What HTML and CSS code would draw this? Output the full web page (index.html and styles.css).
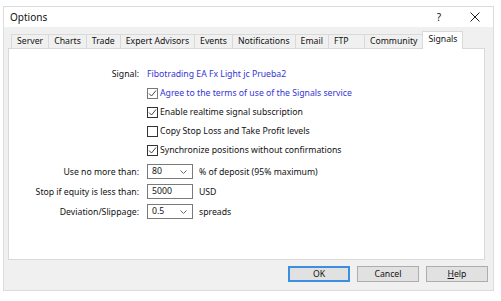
FILE: index.html
```html
<!DOCTYPE html>
<html lang="en">
<head>
  <meta charset="UTF-8">
  <title>Options</title>
  <link rel="stylesheet" href="styles.css">
</head>
<body>
  <div class="window">
    <div class="titlebar">
      <span class="title">Options</span>
      <span class="tb-btn help-q">?</span>
      <span class="tb-btn close">
        <svg width="10" height="10" viewBox="0 0 10 10"><path d="M0.5 0.5 L9.5 9.5 M9.5 0.5 L0.5 9.5" stroke="#222" stroke-width="1"/></svg>
      </span>
    </div>

    <div class="body">
      <div class="tabs">
        <div class="tab">Server</div>
        <div class="tab">Charts</div>
        <div class="tab">Trade</div>
        <div class="tab">Expert Advisors</div>
        <div class="tab">Events</div>
        <div class="tab">Notifications</div>
        <div class="tab">Email</div>
        <div class="tab tab-ftp">FTP</div>
        <div class="tab">Community</div>
        <div class="tab active">Signals</div>
      </div>

      <div class="panel">
        <div class="signal-row">
          <span class="label">Signal:</span>
          <span class="link">Fibotrading EA Fx Light jc Prueba2</span>
        </div>

        <div class="checks">
          <label class="check focus"><span class="box"><svg width="9" height="9" viewBox="0 0 9 9"><path d="M1 4.5 L3.5 7 L8 1.5" fill="none" stroke="#444"/></svg></span><span class="link">Agree to the terms of use of the Signals service</span></label>
          <label class="check"><span class="box"><svg width="9" height="9" viewBox="0 0 9 9"><path d="M1 4.5 L3.5 7 L8 1.5" fill="none" stroke="#444"/></svg></span>Enable realtime signal subscription</label>
          <label class="check"><span class="box"></span>Copy Stop Loss and Take Profit levels</label>
          <label class="check"><span class="box"><svg width="9" height="9" viewBox="0 0 9 9"><path d="M1 4.5 L3.5 7 L8 1.5" fill="none" stroke="#444"/></svg></span>Synchronize positions without confirmations</label>
        </div>

        <div class="fields">
          <span class="label">Use no more than:</span>
          <div class="control">
            <span class="field combo">80<svg width="7" height="4" viewBox="0 0 7 4"><path d="M0.5 0.5 L3.5 3.5 L6.5 0.5" fill="none" stroke="#666"/></svg></span>
            <span class="unit">% of deposit (95% maximum)</span>
          </div>

          <span class="label">Stop if equity is less than:</span>
          <div class="control">
            <span class="field">5000</span>
            <span class="unit">USD</span>
          </div>

          <span class="label">Deviation/Slippage:</span>
          <div class="control">
            <span class="field combo">0.5<svg width="7" height="4" viewBox="0 0 7 4"><path d="M0.5 0.5 L3.5 3.5 L6.5 0.5" fill="none" stroke="#666"/></svg></span>
            <span class="unit">spreads</span>
          </div>
        </div>
      </div>
    </div>

    <div class="footer">
      <button class="btn default">OK</button>
      <button class="btn">Cancel</button>
      <button class="btn"><u>H</u>elp</button>
    </div>
  </div>
</body>
</html>
```

FILE: styles.css
```css
* { box-sizing: border-box; }
body {
  margin: 0;
  background: #fff;
  font-family: "Noto Sans", "Open Sans", sans-serif;
  font-size: 8.7px;
  color: #111;
}
.window {
  width: 491px;
  height: 285px;
  margin: 6px 0 0 3px;
  background: #f0f0f0;
  border: 1px solid #dcdcdc;
  box-shadow: 0 5px 0 #9a9a9a;
  display: flex;
  flex-direction: column;
}
.titlebar {
  height: 20px;
  background: #fff;
  display: flex;
  align-items: center;
  padding-left: 6px;
}
.title {
  flex: 1;
  font-size: 10px;
}
.tb-btn {
  width: 36px;
  text-align: center;
  font-size: 10px;
}
.close svg { display: block; margin: 0 auto; }
.body {
  padding: 4px 8px 0 4px;
}
.tabs {
  display: flex;
  align-items: flex-end;
  padding-left: 3px;
  height: 17px;
  position: relative;
  z-index: 1;
}
.tab {
  height: 14px;
  line-height: 13px;
  padding: 0 5px;
  border: 1px solid #d9d9d9;
  border-bottom: none;
  border-right: none;
  background: #f0f0f0;
  white-space: nowrap;
}
.tab-ftp { min-width: 36px; }
.tab.active {
  height: 18px;
  line-height: 15px;
  background: #fff;
  border-right: 1px solid #d9d9d9;
  margin-bottom: -1px;
}
.panel {
  height: 212px;
  background: #fff;
  border: 1px solid #d9d9d9;
  padding-top: 19px;
}
.label {
  text-align: right;
}
.signal-row {
  display: grid;
  grid-template-columns: 130px auto;
  column-gap: 8px;
  height: 12px;
  line-height: 12px;
}
.link { color: #3535d2; }
.checks {
  display: flex;
  flex-direction: column;
  gap: 7px;
  margin: 7px 0 0 138px;
}
.check {
  display: flex;
  align-items: center;
  height: 12px;
  gap: 2px;
}
.box {
  width: 11px;
  height: 11px;
  border: 1px solid #333;
  background: #fff;
}
.box svg { display: block; }
.check.focus .box { border-color: #777; }
.fields {
  display: grid;
  grid-template-columns: 130px auto;
  column-gap: 8px;
  row-gap: 5px;
  margin-top: 8px;
  align-items: center;
}
.control {
  display: flex;
  align-items: center;
  gap: 6px;
}
.field {
  width: 46px;
  height: 15px;
  border: 1px solid #7a7a7a;
  background: #fff;
  padding: 0 4px;
  line-height: 13px;
  display: flex;
  align-items: center;
  justify-content: space-between;
}
.field svg { margin-right: 1px; }
.footer {
  display: flex;
  justify-content: flex-end;
  gap: 7px;
  padding: 6px 5px 0 0;
}
.btn {
  width: 62px;
  height: 16px;
  border: 1px solid #adadad;
  background: #e1e1e1;
  font: inherit;
  color: #111;
  padding: 0;
}
.btn.default {
  border: 2px solid #3c8ede;
}
```
